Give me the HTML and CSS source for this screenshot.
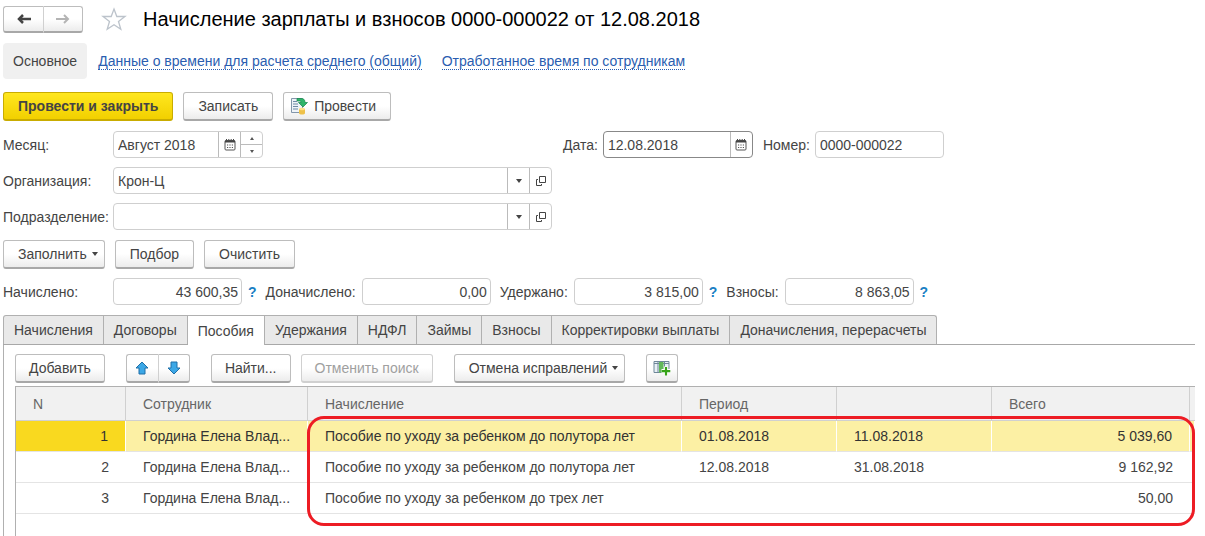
FILE: index.html
```html
<!DOCTYPE html>
<html lang="ru">
<head>
  <meta charset="UTF-8">
  <meta name="viewport" content="width=device-width, initial-scale=1">
  <title>Начисление зарплаты и взносов</title>
  <link rel="stylesheet" href="styles.css">
</head>
<body>
<svg class="sprite" aria-hidden="true">
  <symbol id="calendar" viewBox="0 0 12 12">
    <path d="M2.5 0v2M4.8 0v2M7.2 0v2M9.5 0v2" stroke="#444"/>
    <rect x="1" y="1.5" width="10" height="9.5" rx="1" fill="#fff" stroke="#555"/>
    <path d="M1 2.5h10" stroke="#444" stroke-width="2"/>
    <path d="M3 6h6.500M3 8.500h6.500" stroke="#555" stroke-dasharray="1.200 1.200"/>
  </symbol>
  <symbol id="open" viewBox="0 0 12 12">
    <path d="M4.500 1.500h6v6h-6z" fill="none" stroke="#444"/>
    <path d="M3 4.500H1.500v6h5V9" fill="none" stroke="#444"/>
  </symbol>
</svg>

<header class="header">
  <div class="group">
    <button class="btn nav" aria-label="Назад"><svg width="16" height="12" viewBox="0 0 16 12"><path d="M15 6H3M7 2L3 6l4 4" fill="none" stroke="#444" stroke-width="2.500"/></svg></button>
    <button class="btn nav" aria-label="Вперед"><svg width="16" height="12" viewBox="0 0 16 12"><path d="M1 6h12M9 2l4 4-4 4" fill="none" stroke="#b4b4b4" stroke-width="2"/></svg></button>
  </div>
  <svg class="star" width="26" height="24" viewBox="0 0 26 24"><path d="M13 2l2.800 7.500H24l-6.500 5 2.300 7.800L13 17.700l-6.800 4.600 2.300-7.800-6.500-5h8.200z" fill="#fff" stroke="#bcc3cb" stroke-width="1.300"/></svg>
  <h1>Начисление зарплаты и взносов 0000-000022 от 12.08.2018</h1>
</header>

<nav class="sections">
  <span class="current">Основное</span>
  <a href="#">Данные о времени для расчета среднего (общий)</a>
  <a href="#">Отработанное время по сотрудникам</a>
</nav>

<div class="commands">
  <button class="btn primary">Провести и закрыть</button>
  <button class="btn">Записать</button>
  <button class="btn with-icon">
    <svg width="18" height="18" viewBox="0 0 18 18">
      <path d="M1.500 1.500h11v14h-11z" fill="#eef3f8" stroke="#8296aa"/>
      <path d="M3 4.500h4M3 7h5M3 9.500h5M3 12h5" stroke="#6f8ba6"/>
      <path d="M7 1.500h4c3 0 4 1.500 4 4h2.500L13 10 8.500 5.500H11c0-1-.5-1.500-1.500-1.500H7z" fill="#2fb56a" stroke="#16864a" stroke-width=".7"/>
      <path d="M9 12v4c0 2 6 2 6 0v-4z" fill="#eec14a"/>
      <ellipse cx="12" cy="12" rx="3" ry="1.300" fill="#ffe38a"/>
    </svg>
    Провести
  </button>
</div>

<div class="form">
  <label for="month">Месяц:</label>
  <div class="field month">
    <input id="month" type="text" value="Август 2018">
    <button aria-label="Выбрать месяц"><svg width="12" height="12"><use href="#calendar"/></svg></button>
    <div class="spinner">
      <button aria-label="Следующий месяц"><i class="up"></i></button>
      <button aria-label="Предыдущий месяц"><i class="down"></i></button>
    </div>
  </div>
  <div class="doc">
    <label for="date">Дата:</label>
    <div class="field date">
      <input id="date" type="text" value="12.08.2018">
      <button aria-label="Выбрать дату"><svg width="12" height="12"><use href="#calendar"/></svg></button>
    </div>
    <label for="number">Номер:</label>
    <div class="field total"><input id="number" type="text" value="0000-000022"></div>
  </div>

  <label for="org">Организация:</label>
  <div class="field">
    <input id="org" type="text" value="Крон-Ц">
    <button aria-label="Список"><i class="caret"></i></button>
    <button aria-label="Открыть"><svg width="12" height="12"><use href="#open"/></svg></button>
  </div>
  <div></div>

  <label for="dept">Подразделение:</label>
  <div class="field">
    <input id="dept" type="text">
    <button aria-label="Список"><i class="caret"></i></button>
    <button aria-label="Открыть"><svg width="12" height="12"><use href="#open"/></svg></button>
  </div>
</div>

<div class="commands">
  <button class="btn dropdown">Заполнить <i class="caret"></i></button>
  <button class="btn">Подбор</button>
  <button class="btn">Очистить</button>
</div>

<div class="totals">
  <div class="sum">
    <label for="accrued">Начислено:</label>
    <div class="field total"><input id="accrued" type="text" value="43 600,35"></div>
    <a href="#" class="help">?</a>
  </div>
  <div class="sum">
    <label for="extra">Доначислено:</label>
    <div class="field total"><input id="extra" type="text" value="0,00"></div>
  </div>
  <div class="sum">
    <label for="held">Удержано:</label>
    <div class="field total"><input id="held" type="text" value="3 815,00"></div>
    <a href="#" class="help">?</a>
  </div>
  <div class="sum">
    <label for="fees">Взносы:</label>
    <div class="field total"><input id="fees" type="text" value="8 863,05"></div>
    <a href="#" class="help">?</a>
  </div>
</div>

<div class="tabs" role="tablist">
  <button role="tab">Начисления</button>
  <button role="tab">Договоры</button>
  <button role="tab" class="active" aria-selected="true">Пособия</button>
  <button role="tab">Удержания</button>
  <button role="tab">НДФЛ</button>
  <button role="tab">Займы</button>
  <button role="tab">Взносы</button>
  <button role="tab">Корректировки выплаты</button>
  <button role="tab">Доначисления, перерасчеты</button>
</div>

<main class="panel">
  <div class="toolbar">
    <button class="btn">Добавить</button>
    <div class="group">
      <button class="btn icon" aria-label="Вверх"><svg width="14" height="14" viewBox="0 0 14 14"><path d="M7 1l6 6h-3v6H4V7H1z" fill="#3ba7e6" stroke="#1f6fa8"/></svg></button>
      <button class="btn icon" aria-label="Вниз"><svg width="14" height="14" viewBox="0 0 14 14"><path d="M7 13l6-6h-3V1H4v6H1z" fill="#3ba7e6" stroke="#1f6fa8"/></svg></button>
    </div>
    <div class="find">
      <button class="btn">Найти...</button>
      <button class="btn" disabled>Отменить поиск</button>
    </div>
    <button class="btn dropdown">Отмена исправлений <i class="caret"></i></button>
    <button class="btn icon" aria-label="Настройка колонок">
      <svg width="18" height="16" viewBox="0 0 18 16">
        <path d="M1 1.500h15v11H1z" fill="#e8f0f6" stroke="#6f8799"/>
        <path d="M1 3.500h15M5 2v11M11.500 2v11" stroke="#6f8799"/>
        <path d="M6 2h4.500v10.500H6z" fill="#62b85a"/>
        <path d="M13 6.500v9M8.500 11h9" stroke="#fff" stroke-width="4"/>
        <path d="M13 7v8.500M8.700 11.200h8.600" stroke="#36a318" stroke-width="2.200"/>
      </svg>
    </button>
  </div>

  <div class="grid">
    <table>
      <colgroup>
        <col class="c-num"><col class="c-name"><col><col class="c-date"><col class="c-date"><col class="c-sum"><col class="c-end">
      </colgroup>
      <thead>
        <tr><th>N</th><th>Сотрудник</th><th>Начисление</th><th>Период</th><th></th><th>Всего</th><th></th></tr>
      </thead>
      <tbody>
        <tr class="selected"><td>1</td><td>Гордина Елена Влад...</td><td>Пособие по уходу за ребенком до полутора лет</td><td>01.08.2018</td><td>11.08.2018</td><td>5 039,60</td><td></td></tr>
        <tr><td>2</td><td>Гордина Елена Влад...</td><td>Пособие по уходу за ребенком до полутора лет</td><td>12.08.2018</td><td>31.08.2018</td><td>9 162,92</td><td></td></tr>
        <tr><td>3</td><td>Гордина Елена Влад...</td><td>Пособие по уходу за ребенком до трех лет</td><td></td><td></td><td>50,00</td><td></td></tr>
      </tbody>
    </table>
    <div class="highlight"></div>
  </div>
</main>
</body>
</html>
```

FILE: styles.css
```css
* { box-sizing: border-box; }
html, body { height: 100%; }
body { margin: 0; padding: 5px 10px 0 3px; display: flex; flex-direction: column; background: #fff; color: #444; font: 14px/18px "Liberation Sans", Arial, sans-serif; }
button, input { font: inherit; color: inherit; }
.sprite { position: absolute; width: 0; height: 0; }

.header { display: flex; align-items: center; height: 28px; }
.star { margin: 0 16px 0 18px; }
h1 { margin: 0; font-size: 20px; line-height: 24px; font-weight: normal; color: #000; white-space: nowrap; }

.btn { display: inline-flex; align-items: center; justify-content: center; gap: 6px; height: 29px; padding: 0 14px; background: linear-gradient(#fff 50%, #ececec); border: 1px solid #bdbdbd; border-bottom: 2px solid #a8a8a8; border-radius: 3px; white-space: nowrap; }
.btn:disabled { color: #a0a0a0; border-color: #d0d0d0; }
.primary { background: linear-gradient(#ffe71f, #f2d000); border-color: #c9ac00; font-weight: bold; }
.with-icon { padding: 0 14px 0 6px; }
.toolbar .btn { padding: 0 13px; }
.btn.dropdown, .toolbar .dropdown { gap: 5px; padding: 0 6px 0 14px; }
.toolbar .icon { width: 32px; padding: 0; }
.nav { width: 40px; height: 27px; padding: 0; }
.group { display: flex; }
.group .btn:first-child { border-right: 0; border-radius: 3px 0 0 3px; }
.group .btn:last-child { border-left-color: #d0d0d0; border-radius: 0 3px 3px 0; }

.sections { display: flex; align-items: center; gap: 20px; margin-top: 10px; }
.sections a { color: #2a5db0; text-decoration: none; border-bottom: 1px dotted #2a5db0; line-height: 16px; }
.current { padding: 9px 10px; margin-right: -9px; background: #f0f0f0; border-radius: 4px; }

.commands { display: flex; gap: 10px; margin-top: 13px; }
.form + .commands { margin-top: 10px; }

.form { display: grid; grid-template-columns: 110px 439px auto; row-gap: 9px; align-items: center; margin-top: 10px; }
.form label { white-space: nowrap; }
.doc { display: flex; align-items: center; gap: 5px; padding-left: 11px; }
.field { display: flex; height: 27px; border: 1px solid #cfcfcf; border-radius: 4px; background: #fff; overflow: hidden; }
.field input { flex: 1; min-width: 0; width: 100%; padding: 0 4px; border: 0; outline: 0; background: none; }
.field button { display: flex; align-items: center; justify-content: center; width: 22px; padding: 0; border: 0; border-left: 1px solid #bbb; background: none; }
.month, .date { width: 150px; }
.date { border-color: #888; margin-right: 5px; }
.total { width: 129px; }
.spinner { display: flex; flex-direction: column; width: 22px; border-left: 1px solid #bbb; }
.field .spinner button { flex: 1; border-left: 0; }
.field .spinner button + button { border-top: 1px solid #bbb; }

.caret, .up, .down { width: 0; height: 0; border: 3px solid transparent; }
.caret { border-top: 4px solid #444; border-bottom: 0; }
.up, .down { border-width: 2px; }
.up { border-bottom: 3px solid #555; border-top: 0; }
.down { border-top: 3px solid #555; border-bottom: 0; }

.totals { display: flex; gap: 9px; margin-top: 9px; }
.sum { display: flex; align-items: center; gap: 6px; }
.sum:first-child label { width: 104px; }
.sum input { text-align: right; padding: 0 3px; }
.help { color: #1a7fc4; font-weight: bold; text-decoration: none; }

.tabs { display: flex; margin-top: 10px; border-bottom: 1px solid #a8a8a8; }
.tabs button { height: 29px; padding: 0 10px; background: #e9e9e9; border: 1px solid #b0b0b0; border-bottom: 0; border-left: 0; white-space: nowrap; }
.tabs button:first-child { border-left: 1px solid #b0b0b0; border-top-left-radius: 3px; }
.tabs button:last-child { border-top-right-radius: 3px; }
.tabs .active { height: 30px; margin-bottom: -1px; background: #fff; }

.panel { flex: 1; display: flex; flex-direction: column; padding: 9px 0 0 11px; border-left: 1px solid #b0b0b0; }
.toolbar { display: flex; gap: 21px; }
.find { display: flex; gap: 10px; }

.grid { position: relative; flex: 1; margin-top: 3px; border: 1px solid #b0b0b0; border-right: 0; border-bottom: 0; }
table { width: 100%; table-layout: fixed; border-collapse: separate; border-spacing: 0; }
.c-num { width: 110px; }
.c-name { width: 182px; }
.c-date { width: 155px; }
.c-sum { width: 198px; }
.c-end { width: 5px; }
th, td { height: 31px; padding: 0 17px; text-align: left; white-space: nowrap; overflow: hidden; border-bottom: 1px solid #e4e4e4; }
th { height: 34px; font-weight: normal; color: #666; background: #f1f1f1; border-right: 1px solid #d0d0d0; border-bottom-color: #d0d0d0; }
th:last-child, td:last-child { padding: 0; border-right: 0; }
td:first-child, td:nth-child(6) { text-align: right; }
.selected td { background: #fcf0a4; border-right: 1px solid #fff; color: #333; }
.selected td:first-child { background: #f9d91f; }
.highlight { position: absolute; top: 29px; left: 291px; right: 0; height: 110px; border: 3px solid #ed1c24; border-radius: 17px; pointer-events: none; }
```
